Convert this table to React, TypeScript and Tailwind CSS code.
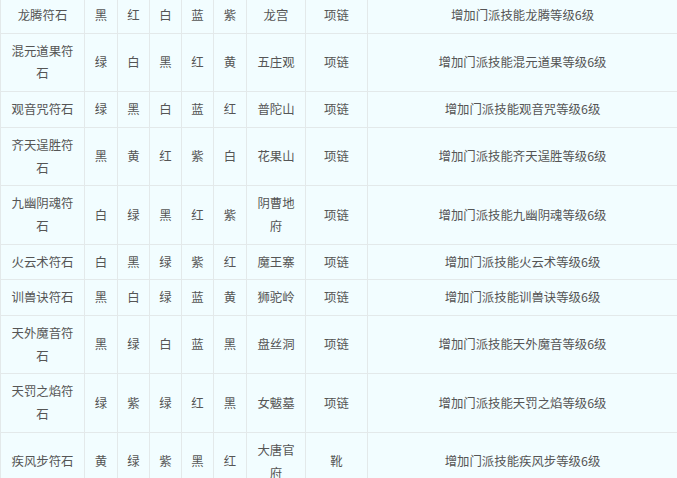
import React from "react";

const rows: string[][] = [
  ["龙腾符石", "黑", "红", "白", "蓝", "紫", "龙宫", "项链", "增加门派技能龙腾等级6级"],
  ["混元道果符石", "绿", "白", "黑", "红", "黄", "五庄观", "项链", "增加门派技能混元道果等级6级"],
  ["观音咒符石", "绿", "黑", "白", "蓝", "红", "普陀山", "项链", "增加门派技能观音咒等级6级"],
  ["齐天逞胜符石", "黑", "黄", "红", "紫", "白", "花果山", "项链", "增加门派技能齐天逞胜等级6级"],
  ["九幽阴魂符石", "白", "绿", "黑", "红", "紫", "阴曹地府", "项链", "增加门派技能九幽阴魂等级6级"],
  ["火云术符石", "白", "黑", "绿", "紫", "红", "魔王寨", "项链", "增加门派技能火云术等级6级"],
  ["训兽诀符石", "黑", "白", "绿", "蓝", "黄", "狮驼岭", "项链", "增加门派技能训兽诀等级6级"],
  ["天外魔音符石", "黑", "绿", "白", "蓝", "黑", "盘丝洞", "项链", "增加门派技能天外魔音等级6级"],
  ["天罚之焰符石", "绿", "紫", "绿", "红", "黑", "女魃墓", "项链", "增加门派技能天罚之焰等级6级"],
  ["疾风步符石", "黄", "绿", "紫", "黑", "红", "大唐官府", "靴", "增加门派技能疾风步等级6级"],
];

export default function App() {
  return (
    <div className="w-[677px] h-[478px] overflow-hidden bg-[#f2fdff]">
      <table
        className="table-fixed border-collapse w-[678px] mt-[-3px] text-[12.4px] leading-[22.7px] text-[#555]"
        style={{ fontFamily: '"Microsoft YaHei", "Noto Sans CJK SC", "Noto Sans", sans-serif' }}
      >
        <colgroup>
          <col className="w-[84px]" />
          <col className="w-[33px]" />
          <col className="w-[32px]" />
          <col className="w-[32px]" />
          <col className="w-[32px]" />
          <col className="w-[33px]" />
          <col className="w-[59px]" />
          <col className="w-[62px]" />
          <col />
        </colgroup>
        <tbody>
          {rows.map((r, i) => (
            <tr key={i}>
              {r.map((c, j) => (
                <td
                  key={j}
                  className="border border-[#e3e9ea] px-[6px] py-[6px] text-center align-middle"
                >
                  {c}
                </td>
              ))}
            </tr>
          ))}
        </tbody>
      </table>
    </div>
  );
}
